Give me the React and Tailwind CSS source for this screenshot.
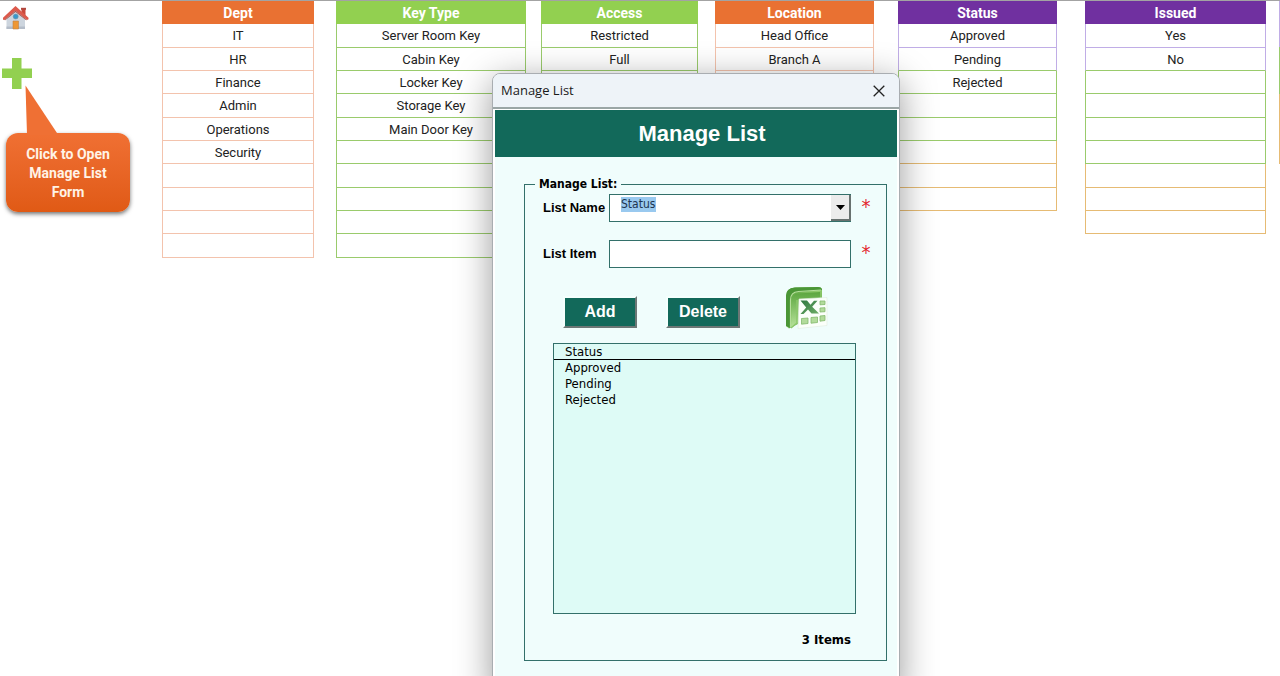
import React from "react";

const BORDERS = {
  orange: "border-[#f3c3ad]",
  green: "border-[#9acb6c]",
  lavender: "border-[#c0ade6]",
  amber: "border-[#e6bb74]",
};

const HEADERS = {
  orange: "bg-[#e97132]",
  green: "bg-[#92d050]",
  purple: "bg-[#7030a0]",
};

const fill = (items, total, color) =>
  Array.from({ length: total }, (_, i) => ({ text: items[i] || "", side: color, bottom: color }));

const band = (items, colors) =>
  colors.map(([side, bottom], i) => ({ text: items[i] || "", side, bottom }));

const LISTS = [
  {
    name: "Dept",
    head: "orange",
    col: "col-start-2",
    rows: fill(["IT", "HR", "Finance", "Admin", "Operations", "Security"], 10, "orange"),
  },
  {
    name: "Key Type",
    head: "green",
    col: "col-start-4",
    rows: fill(["Server Room Key", "Cabin Key", "Locker Key", "Storage Key", "Main Door Key"], 10, "green"),
  },
  { name: "Access", head: "green", col: "col-start-6", rows: fill(["Restricted", "Full"], 8, "green") },
  { name: "Location", head: "orange", col: "col-start-8", rows: fill(["Head Office", "Branch A"], 8, "orange") },
  {
    name: "Status",
    head: "purple",
    col: "col-start-10",
    rows: band(
      ["Approved", "Pending", "Rejected"],
      [
        ["lavender", "lavender"],
        ["lavender", "green"],
        ["green", "green"],
        ["green", "green"],
        ["green", "green"],
        ["amber", "amber"],
        ["amber", "amber"],
        ["amber", "amber"],
      ]
    ),
  },
  {
    name: "Issued",
    head: "purple",
    col: "col-start-12",
    rows: band(
      ["Yes", "No"],
      [
        ["lavender", "lavender"],
        ["lavender", "green"],
        ["green", "green"],
        ["green", "green"],
        ["green", "green"],
        ["green", "green"],
        ["amber", "amber"],
        ["amber", "amber"],
        ["amber", "amber"],
      ]
    ),
  },
];

function ListTable({ list }) {
  return (
    <table className={`${list.col} row-start-1 w-full table-fixed border-separate border-spacing-0 self-start text-center`}>
      <thead>
        <tr>
          <th className={`h-[23px] p-0 text-sm leading-5 font-bold text-white ${HEADERS[list.head]}`}>{list.name}</th>
        </tr>
      </thead>
      <tbody>
        {list.rows.map((row, i) => (
          <tr key={i} className="h-[23px] nth-[3n+1]:h-6">
            <td className={`border-x border-b p-0 pt-px leading-5 ${BORDERS[row.side]} ${row.bottom === "green" ? "border-b-[#9acb6c]" : ""}`}>
              {row.text}
            </td>
          </tr>
        ))}
      </tbody>
    </table>
  );
}

function HomeIcon() {
  return (
    <svg viewBox="0 0 26 24" className="h-6 w-[26px]" aria-hidden="true">
      <path d="M18.500 2.500h4v9h-4z" fill="#c9493c" />
      <path d="M18 1.800h5v2h-5z" fill="#b0463d" />
      <path d="M3.500 11.500 12.500 3l9.500 9v11H3.500z" fill="#cdd5de" />
      <path d="M3.500 20.500H22V23H3.500z" fill="#b4bcc8" />
      <path d="M12.500 0 0 11.800v2L1.500 14l11-9.300L24 14l1.500-.7v-1.500z" fill="#dc5a4c" />
      <path d="M12.500 4.700 1.500 14l.8.3 10.200-8.200 10.600 8.200.9-.3z" fill="#a8564f" />
      <circle cx="12.700" cy="10.500" r="2.500" fill="#3798cd" stroke="#7a93a2" strokeWidth=".6" />
      <path d="M10 15h5.500v8H10z" fill="#ee9733" stroke="#c08344" strokeWidth=".6" />
    </svg>
  );
}

function ExcelIcon() {
  return (
    <svg viewBox="0 0 44 44" className="h-11 w-11" aria-hidden="true">
      <defs>
        <linearGradient id="xl-frame" x1="0" y1="0" x2="1" y2="1">
          <stop offset="0" stopColor="#4e9b35" />
          <stop offset=".5" stopColor="#8fca6b" />
          <stop offset="1" stopColor="#4f9a3a" />
        </linearGradient>
        <linearGradient id="xl-inner" x1="0" y1="0" x2="0" y2="1">
          <stop offset="0" stopColor="#5ba63f" />
          <stop offset="1" stopColor="#b9e39c" />
        </linearGradient>
        <linearGradient id="xl-x" x1="0" y1="0" x2="1" y2="1">
          <stop offset="0" stopColor="#2e7740" />
          <stop offset="1" stopColor="#6fae68" />
        </linearGradient>
      </defs>
      <path d="M1 10Q1 2 10 1.500L33 1q4 0 4 3v11L13 38 4 42.500 1 40z" fill="url(#xl-frame)" />
      <path d="M1 10Q1 2 10 1.500L33 1q4 0 4 3l-25 2q-6 .5-6 7L5 42 1 40z" fill="#4a9636" />
      <path d="M7 14q0-6 6-6.500L35 6v9L13 36l-7 6z" fill="url(#xl-inner)" />
      <path d="M5.500 41V14q0-8 8-8.500L36 4" fill="none" stroke="#b4de9b" strokeWidth="1.200" />
      <path d="M12 14v23L6 42" fill="none" stroke="#8cc86c" strokeWidth="1.500" />
      <path d="M14 13 42 11.500v28L13 42.500z" fill="#fbfffa" stroke="#e0ece0" strokeWidth=".6" />
      <path d="M15.500 14.500H22l3.500 4.200 3.500-4h3.500l-5.300 6 6.800 6.800h-7.500l-3.500-4-4.500 4.500h-3l5.700-6.500z" fill="url(#xl-x)" />
      <g fill="#b2db9b" stroke="#83b96c" strokeWidth=".8">
        <path d="M35 15h5v3.500l-5 .3zM35 22l5-.3v4l-5 .3zM35 30l5-.5v5l-5 .7z" />
        <path d="M16.500 32.500l6.500-.5v5.500l-6.500.7zM26 31.500l6.500-.5v5.500l-6.500.7z" />
      </g>
    </svg>
  );
}

function FormButton({ children }) {
  return (
    <button
      type="button"
      className="h-8 w-[74px] border-2 border-t-[#f5fffd] border-r-[#6c7775] border-b-[#6c7775] border-l-[#f5fffd] bg-[#12695a] pb-px text-center text-base leading-6 font-bold text-white"
    >
      {children}
    </button>
  );
}

function Required() {
  return (
    <span aria-hidden="true" className="w-[30px] text-center font-['DejaVu_Sans_Condensed','DejaVu_Sans',sans-serif] text-xl leading-6 text-[#e3262c]">
      *
    </span>
  );
}

function ManageListDialog() {
  return (
    <section
      role="dialog"
      aria-label="Manage List"
      className="absolute top-[72px] left-[492px] w-[408px] overflow-hidden rounded-t-lg border border-[#a9adb1] bg-[#f0fdfc] font-['Liberation_Sans',Arial,sans-serif] text-black shadow-[0_8px_36px_rgba(0,0,0,0.4)]"
    >
      <div className="flex h-[35px] items-center justify-between border-b-2 border-[#9aa5a5] bg-[#eef3f8] pr-3 pl-2 font-['Open_Sans','Noto_Sans',sans-serif] text-[13px] text-[#1a1a1a]">
        <span>Manage List</span>
        <button type="button" aria-label="Close" className="flex h-4 w-4 items-center justify-center">
          <svg viewBox="0 0 12 12" className="h-3 w-3" aria-hidden="true">
            <path d="M.7.7l10.600 10.600M11.300.7.7 11.300" stroke="#222" strokeWidth="1.300" />
          </svg>
        </button>
      </div>
      <div className="border-x-2 border-t border-white">
        <h1 className="flex h-[47px] items-center justify-center bg-[#12695a] pl-3 text-[22px] font-bold text-white">Manage List</h1>
        <div className="pt-[19px] pr-[10px] pb-8 pl-[29px]">
          <fieldset className="min-w-0 border border-[#33706a] pb-[10px] pl-[18px]">
            <legend className="-ml-2 px-1 font-['DejaVu_Sans_Condensed','DejaVu_Sans',sans-serif] text-xs leading-4 font-bold">Manage List:</legend>
            <div className="mt-[2px] flex">
              <label htmlFor="list-name" className="w-[66px] text-[13px] leading-7 font-bold">
                List Name
              </label>
              <div className="relative flex-1">
                <select
                  id="list-name"
                  defaultValue="Status"
                  className="block h-7 w-full appearance-none border border-[#33706a] bg-white bg-[linear-gradient(#99c9ef,#99c9ef)] bg-[length:35px_15px] bg-[position:11px_2px] bg-no-repeat pb-2 pl-[11px] font-['DejaVu_Sans_Condensed','DejaVu_Sans',sans-serif] text-xs leading-4 text-[#1d3550]"
                >
                  {LISTS.map((l) => (
                    <option key={l.name}>{l.name}</option>
                  ))}
                </select>
                <span className="pointer-events-none absolute top-px right-0 flex h-[26px] w-5 items-center justify-center border-r-2 border-b-2 border-[#68716f] bg-[#ececec]">
                  <svg viewBox="0 0 9 5" className="h-[5px] w-[9px]" aria-hidden="true">
                    <path d="M0 0h9L4.500 5z" fill="#000" />
                  </svg>
                </span>
              </div>
              <Required />
              <span className="w-[5px]" />
            </div>
            <div className="mt-[18px] flex">
              <label htmlFor="list-item" className="w-[66px] text-[13px] leading-7 font-bold">
                List Item
              </label>
              <input
                id="list-item"
                type="text"
                className="h-7 min-w-0 flex-1 border border-[#33706a] bg-white px-[11px] font-['DejaVu_Sans_Condensed','DejaVu_Sans',sans-serif] text-xs"
              />
              <Required />
              <span className="w-[5px]" />
            </div>
            <div className="mt-[18px] flex items-end pl-5">
              <div className="flex gap-[29px] pb-0.5">
                <FormButton>Add</FormButton>
                <FormButton>Delete</FormButton>
              </div>
              <button type="button" aria-label="Export to Excel" className="ml-[45px]">
                <ExcelIcon />
              </button>
            </div>
            <div className="mt-[13px] mr-[30px] ml-[10px] h-[271px] border border-[#33706a] bg-[#defbf6] font-['DejaVu_Sans_Condensed','DejaVu_Sans',sans-serif] text-[13px] leading-4">
              <table className="w-full border-separate border-spacing-0 text-left">
                <thead>
                  <tr>
                    <th className="h-4 border-b border-black p-0 pl-[11px] leading-[15px] font-normal">Status</th>
                  </tr>
                </thead>
                <tbody>
                  {["Approved", "Pending", "Rejected"].map((item) => (
                    <tr key={item}>
                      <td className="p-0 pl-[11px]">{item}</td>
                    </tr>
                  ))}
                </tbody>
              </table>
            </div>
            <p className="mt-4 pr-[35px] text-right font-['DejaVu_Sans_Condensed','DejaVu_Sans',sans-serif] text-[13px] leading-5 font-bold">
              3 Items
            </p>
          </fieldset>
        </div>
      </div>
    </section>
  );
}

export default function App() {
  return (
    <main className="relative h-screen overflow-hidden border-t border-[#a3a3a3] bg-white font-[Roboto,sans-serif] text-[13px] text-[#222]">
      <div className="grid grid-cols-[162fr_152fr_22fr_190fr_15fr_157fr_17fr_159fr_24fr_159fr_28fr_181fr_13fr_1fr]">
        <aside className="col-start-1 row-start-1 flex flex-col items-start">
          <a href="#home" aria-label="Home" className="mt-[5px] ml-[3px]">
            <HomeIcon />
          </a>
          <button type="button" aria-label="Open Manage List form" className="mt-7 ml-[2px]">
            <svg viewBox="0 0 30 31" className="h-[31px] w-[30px]" aria-hidden="true">
              <path d="M10 0h9.500v10.500H30v9.500H19.500V31H10V20H0v-9.500h10z" fill="#92d050" />
            </svg>
          </button>
          <div className="relative mt-11 ml-[6px] w-[124px] rounded-xl bg-linear-to-b from-[#f07033] to-[#e05a15] px-4 pt-3 pb-[10px] text-center text-sm leading-[19px] font-bold text-[#fff3e6] shadow-[0_2px_4px_rgba(0,0,0,0.55)]">
            <svg viewBox="0 0 34 50" className="absolute -top-12 left-[19px] h-[50px] w-[34px]" aria-hidden="true">
              <path d="M.5.5 32 48v2H2z" fill="#ef7034" />
            </svg>
            Click to Open Manage List Form
          </div>
        </aside>
        {LISTS.map((list) => (
          <ListTable key={list.name} list={list} />
        ))}
        <div className="col-start-14 row-start-1 flex flex-col">
          <span className="h-[46px] bg-[#c0ade6]" />
          <span className="h-[47px] bg-[#9acb6c]" />
          <span className="h-[70px] bg-[#e6bb74]" />
        </div>
      </div>
      <ManageListDialog />
    </main>
  );
}
